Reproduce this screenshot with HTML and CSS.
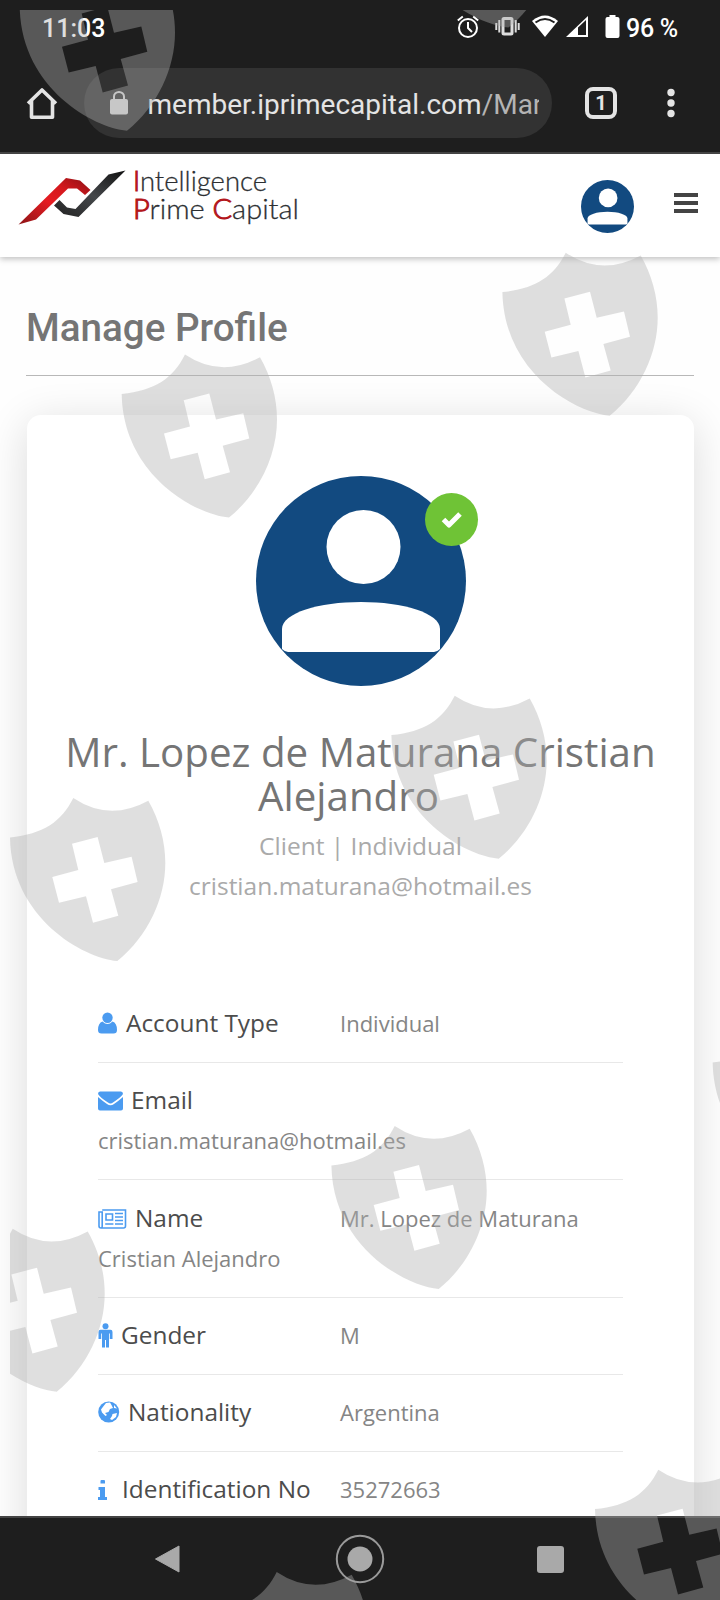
FILE: index.html
```html
<!DOCTYPE html>
<html lang="en">
<head>
<meta charset="utf-8">
<title>Manage Profile</title>
<link rel="stylesheet" href="styles.css">
</head>
<body>
<div class="screen">
  <header class="browser">
    <div class="status">
      <span class="clock">11:03</span>
      <div class="status-icons">
        <svg class="alarm" width="22" height="24" viewBox="457 15 22 24" fill="none" stroke="#fff" stroke-width="2"><circle cx="468" cy="28" r="9"/><path d="M468 22v6l4 4M457.800 20.500l5-4M478.200 20.500l-5-4"/></svg>
        <svg class="vibrate" width="26" height="24" viewBox="494 15 26 24" fill="none" stroke="#ddd" stroke-width="2"><rect x="503" y="18.500" width="9" height="15.500" rx="1" stroke-width="3"/><path d="M499.300 20v12.500M496.300 23v7M515.700 20v12.500M518.700 23v7"/></svg>
        <svg class="wifi" width="28" height="24" viewBox="531 15 28 24"><path d="M545 37L532 21Q545 10 558 21z" fill="#fff"/><path d="M535.500 22.500Q545 15.500 554.500 22.500" fill="none" stroke="#1e1e1e" stroke-width="2"/></svg>
        <svg class="signal" width="24" height="24" viewBox="565 15 24 24"><path d="M566 37L588 16V37z" fill="#fff"/><path d="M578 27.500L586 20V35H578z" fill="#1e1e1e"/></svg>
        <svg class="battery" width="15" height="24" viewBox="604.500 15 15 24" fill="#fff"><path d="M609 17v-2h6v2h2q2 0 2 2v17q0 2-2 2h-10q-2 0-2-2v-17q0-2 2-2z"/></svg>
      </div>
      <span class="percent">96 %</span>
    </div>
    <div class="toolbar">
      <svg class="home" width="32" height="34" viewBox="26 86 32 34" fill="none" stroke="#e4e4e4" stroke-width="3.600" stroke-linejoin="round"><path d="M28 103.500L42 90l14 13.500M31.500 101v16.200h21V101"/></svg>
      <div class="omnibox">
        <svg class="lock" width="18" height="24" viewBox="110 91 18 24"><rect x="110" y="99" width="18" height="15.500" rx="2" fill="#d8d8d8"/><path d="M114 100v-3.500a5 4.500 0 0 1 10 0v3.500" fill="none" stroke="#d8d8d8" stroke-width="2"/></svg>
        <span class="url">member.iprimecapital.com<span class="path">/Man</span></span>
      </div>
      <span class="tabs">1</span>
      <svg class="dots" width="8" height="30" viewBox="0 0 8 30" fill="#e4e4e4"><circle cx="4" cy="4.500" r="3.700"/><circle cx="4" cy="15" r="3.700"/><circle cx="4" cy="25.500" r="3.700"/></svg>
    </div>
  </header>

  <main class="page">
    <div class="site-header">
      <svg class="logo" width="284" height="62" viewBox="16 166 284 62">
        <defs>
          <linearGradient id="red" x1="0" y1="1" x2="1" y2="0"><stop offset="0" stop-color="#8d1416"/><stop offset=".45" stop-color="#e51c22"/><stop offset=".7" stop-color="#d4181d"/><stop offset="1" stop-color="#8a1114"/></linearGradient>
          <linearGradient id="ink" x1="0" y1="1" x2="1" y2="0"><stop offset="0" stop-color="#222"/><stop offset=".5" stop-color="#44474a"/><stop offset="1" stop-color="#111"/></linearGradient>
        </defs>
        <path d="M18.500 224.500L66 178l14 2.500 10.500 9.500-5.500 5-8-6.500h-9L36 219.500z" fill="url(#red)"/>
        <path d="M54 205.500l5.500-5.500 7.500 7.500 8.500 1.500 33-34.500 17-4-47 46.500-15-3z" fill="url(#ink)"/>
        <text x="133" y="191" textLength="134" lengthAdjust="spacingAndGlyphs" class="logo-text"><tspan class="logo-red">I</tspan>ntelligence</text>
        <text x="133" y="219" textLength="166" lengthAdjust="spacingAndGlyphs" class="logo-text"><tspan class="logo-red">P</tspan>rime <tspan class="logo-red">C</tspan>apital</text>
      </svg>
      <svg class="avatar-small" viewBox="0 0 210 210"><use href="#avatar"/></svg>
      <span class="menu"><i></i><i></i><i></i></span>
    </div>

    <h1 class="title">Manage Profile</h1>

    <section class="card">
      <div class="portrait">
        <svg class="avatar-large" viewBox="0 0 210 210">
          <g id="avatar"><circle cx="105" cy="105" r="105" fill="#124a80"/><circle cx="107.500" cy="71" r="37" fill="#fff"/><path d="M26 153C26 137 63 126 105 126S184 137 184 153V173Q181 176 178 176H32Q29 176 26 173z" fill="#fff"/></g>
        </svg>
        <span class="badge"><svg width="22" height="18" viewBox="0 0 22 18"><path d="M2.500 8.500l5.500 5.500L19 3" fill="none" stroke="#fff" stroke-width="5" stroke-linejoin="round"/></svg></span>
      </div>
      <h2 class="name">Mr. Lopez de Maturana Cristian<br><span class="surname">Alejandro</span></h2>
      <p class="sub">Client | Individual</p>
      <p class="sub">cristian.maturana@hotmail.es</p>
      <ul class="details">
        <li><span class="label"><svg width="20" height="22" viewBox="0 0 20 22"><circle cx="9.500" cy="5.700" r="5.200"/><path d="M4.500 9.500Q9.500 14.500 14.500 9.500Q19 11 19 18Q19 21.500 15.500 21.500H3.500Q0 21.500 0 18Q0 11 4.500 9.500z"/></svg>Account Type</span>Individual</li>
        <li><span class="label"><svg width="25" height="20" viewBox="0 0 25 20"><path d="M2 .5H23Q25 .5 25 3Q23 6 15 11.500Q12.500 13.500 10 11.500Q2 6.500 0 3Q0 .5 2 .5zM0 6Q4 9.500 9 13Q12.500 15.500 16 13Q21 9.500 25 6V17.500Q25 19.500 23 19.500H2Q0 19.500 0 17.500z"/></svg>Email</span><br>cristian.maturana@hotmail.es</li>
        <li><span class="label"><svg width="29" height="20" viewBox="0 0 29 20"><path d="M4.200 1H27.500V17Q27.500 19 25.500 19H3Q1 19 1 17V3H4.200V17Q4.200 19 3 19" fill="none" stroke="#4b9bf0" stroke-width="1.600"/><path d="M8 5h6.500v6H8zM17 4.500h8M17 8h8M17 11.500h8M7.200 15h8.200M17 15h8" fill="none" stroke="#4b9bf0" stroke-width="1.600"/></svg>Name</span>Mr. Lopez de Maturana<br>Cristian Alejandro</li>
        <li><span class="label"><svg class="low" width="15" height="25" viewBox="0 0 15 25"><circle cx="7.500" cy="3.200" r="3"/><path d="M2.500 6.800h10q2 0 2 2.200v7h-2.700v-5.500h-.8V24.500H8V17H7v7.500H4V10.500H3.200V16H.500V9q0-2.200 2-2.200z"/></svg>Gender</span>M</li>
        <li><span class="label"><svg width="22" height="22" viewBox="0 0 22 22"><circle cx="10.700" cy="11" r="10.500"/><path d="M6 4.500L8 2l4 -.5L13.500 4 15 7l-3 1-1.500 3L7 12l2 2-1.500 1L4 11.500l-1-3zM14.500 13l4.500-1-1 4-4 3-2-1 2-3zM16 4l3 3.500-3-.5z" fill="#fff"/></svg>Nationality</span>Argentina</li>
        <li><span class="label"><svg width="10" height="20" viewBox="0 0 10 20"><path d="M2.500 1Q2.500 0 3.500 0H6Q7 0 7 1V3.500H2.500zM.500 7H7V17H9V20H0V17H2V10H.500z"/></svg><span class="indent">Identification No</span></span>35272663</li>
      </ul>
    </section>
  </main>

  <nav class="navbar">
    <svg width="26" height="30" viewBox="0 0 26 30"><path d="M25 2V28L1.500 15z" fill="#a9a9a9" stroke="#a9a9a9" stroke-linejoin="round"/></svg>
    <svg class="circle" width="50" height="50" viewBox="0 0 50 50"><circle cx="25" cy="25" r="23.200" fill="none" stroke="#9a9a9a" stroke-width="2"/><circle cx="25" cy="25" r="12.500" fill="#a9a9a9"/></svg>
    <span class="recent"></span>
  </nav>

  <svg class="shields" width="710" height="1590" viewBox="10 10 710 1590">
    <defs><path id="shield" fill-rule="evenodd" d="M0 0Q36 24 75 2.700C86 22 92 43 92 65C92 100 75 138 44 163C10 160-62 120-63.300 39.400C-30 36-12 24 0 0zM-1.300 45.700L24.300 39L31 65L58.300 58.700L64.300 84L37.700 91.300L45 117.700L19.700 124.700L12.700 98.300L-14.300 104.700L-21 79L5 72z"/></defs>
    <g fill="#b0b0b0" fill-opacity=".4">
      <use href="#shield" x="83" y="-32.300"/><use href="#shield" x="464.500" y="-135.500"/>
      <use href="#shield" x="565.700" y="252.700"/><use href="#shield" x="185" y="354.500"/>
      <use href="#shield" x="454.700" y="695.700"/><use href="#shield" x="73.300" y="798"/>
      <use href="#shield" x="776" y="1023"/><use href="#shield" x="394.700" y="1126"/>
      <use href="#shield" x="12.700" y="1228.700"/><use href="#shield" x="658.300" y="1469.700"/>
      <use href="#shield" x="276.700" y="1572"/>
    </g>
  </svg>
</div>
</body>
</html>
```
FILE: styles.css
```css
* { box-sizing: border-box; }
body { margin: 0; }
.screen { position: relative; width: 720px; height: 1600px; overflow: hidden; display: flex; flex-direction: column; background: #fff; font-family: "Open Sans", sans-serif; }
.browser { height: 154px; flex: none; background: #1e1e1e; border-bottom: 2px solid #444; font-family: Roboto, sans-serif; }
.status { height: 56px; display: flex; align-items: center; padding: 1px 43px 0 42px; color: #fff; font-size: 25px; font-weight: 500; }
.clock { flex: 1; }
.status-icons { display: flex; align-items: center; margin-top: -3px; }
.vibrate { margin-left: 15px; }
.wifi { margin-left: 11px; }
.signal { margin-left: 6px; }
.battery { margin-left: 15.5px; }
.percent { width: 51px; margin-left: 6.500px; white-space: nowrap; letter-spacing: -.3px; }
.toolbar { height: 96px; display: flex; align-items: center; padding: 0 45px 0 26px; }
.home { margin-bottom: 2px; }
.omnibox { width: 468px; height: 70px; margin: 0 33px 0 26px; padding: 0 13px 0 26px; border-radius: 35px; background: #323232; display: flex; align-items: center; margin-top: -3px; }
.url { margin: 4px 0 0 19.5px; flex: 1; overflow: hidden; white-space: nowrap; color: #e4e4e4; font-size: 28px; line-height: 40px; }
.path { color: #b4b4b4; }
.tabs { width: 32px; height: 32px; margin-top: -2px; border: 4px solid #e4e4e4; border-radius: 8px; color: #e4e4e4; font-size: 20px; font-weight: 700; line-height: 25px; text-align: center; }
.dots { margin-left: auto; margin-top: -2px; }
.page { flex: 1; min-height: 0; overflow: hidden; background: #fefefe; }
.site-header { position: relative; height: 103px; display: flex; align-items: flex-start; padding: 12px 22px 0 16px; background: #fff; box-shadow: 0 2px 6px rgba(0,0,0,.25); }
.logo { overflow: visible; }
.logo-text { font-family: Lato, sans-serif; font-weight: 300; font-size: 28px; fill: #2c2f32; stroke: #2c2f32; stroke-width: .3; }
.logo-red { fill: #b3161b; stroke: #b3161b; stroke-width: 1; }
.avatar-small { width: 53px; height: 53px; margin: 14px 0 0 281px; }
.menu { margin: 27px 0 0 auto; display: grid; gap: 4px; }
.menu i { width: 24px; height: 4px; background: #444; }
.title { margin: 46px 26px 0; height: 73px; border-bottom: 1px solid #b8b8b8; color: #757575; font: 500 38.6px/50px Roboto, sans-serif; }
.card { margin: 39px 26px 0 27px; height: 1400px; padding-top: 61px; border-radius: 14px; background: #fff; box-shadow: 0 8px 44px rgba(0,0,0,.14); text-align: center; }
.portrait { position: relative; width: 210px; height: 210px; margin: 0 auto; left: .5px; }
.avatar-large { display: block; width: 210px; height: 210px; }
.badge { position: absolute; left: 169px; top: 17px; width: 53px; height: 53px; border-radius: 50%; background: #6fc336; display: flex; align-items: center; justify-content: center; }
.name { margin: 44px 0 0; color: #757575; font-size: 40.3px; font-weight: 400; line-height: 43.500px; white-space: nowrap; }
.surname { margin-right: 24px; }
.sub { margin: 9px 0 -9px; color: #aaa; font-size: 24.5px; line-height: 40px; }
.sub + .sub { margin: 9px 0 0; }
.details { list-style: none; margin: 80px 71px 0; padding: 0; text-align: left; color: #858585; font-size: 22px; }
.details li { padding: 17.200px 0 19px; line-height: 40px; border-bottom: 1px solid #e8e8e8; white-space: nowrap; }
.label { display: inline-block; width: 242px; height: 40px; vertical-align: top; color: #4c4c4c; font-size: 24.4px; }
.label svg { fill: #4b9bf0; vertical-align: -2px; margin-right: 8px; }
.label .low { vertical-align: -4px; }
.indent { margin-left: 6px; }
.navbar { height: 84px; flex: none; border-top: 2px solid #444; background: #1e1e1e; display: flex; align-items: center; padding: 0 156px 0 154px; justify-content: space-between; }
.circle { margin-left: 2px; }
.recent { width: 27px; height: 27px; border-radius: 3px; background: #a9a9a9; }
.shields { position: absolute; left: 10px; top: 10px; pointer-events: none; }
```
